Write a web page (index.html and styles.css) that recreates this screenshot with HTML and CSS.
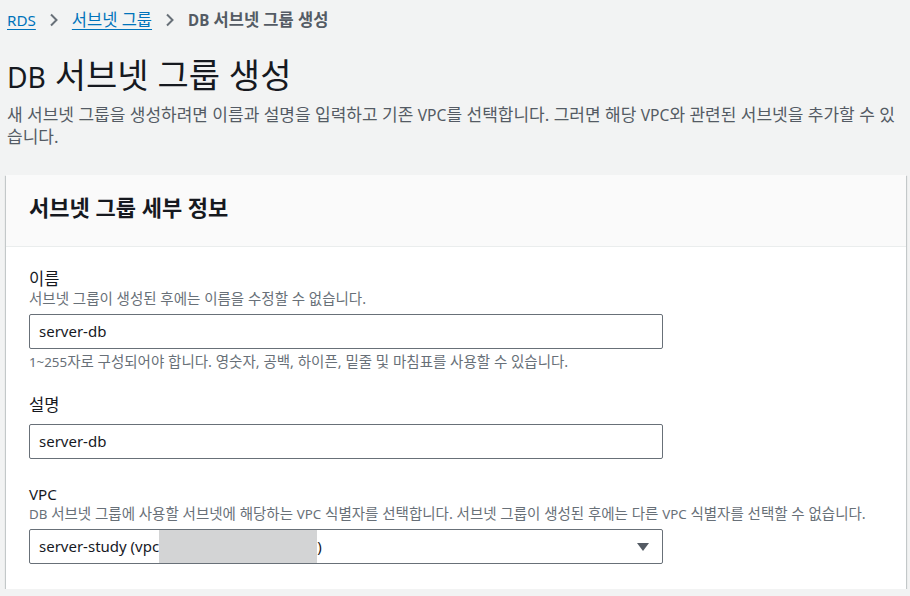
FILE: index.html
```html
<!DOCTYPE html>
<html lang="ko">
<head>
    <meta charset="UTF-8">
    <title>DB 서브넷 그룹 생성</title>
    <link rel="stylesheet" href="styles.css">
</head>
<body>
    <div class="page">
        <nav class="breadcrumbs">
            <a href="#"><span class="en">RDS</span></a>
            <span class="sep">
                <svg width="10" height="14" viewBox="0 0 10 14"><path d="M2 1.5 L7.5 7 L2 12.5" fill="none" stroke="#687078" stroke-width="2"/></svg>
            </span>
            <a href="#">서브넷 그룹</a>
            <span class="sep">
                <svg width="10" height="14" viewBox="0 0 10 14"><path d="M2 1.5 L7.5 7 L2 12.5" fill="none" stroke="#687078" stroke-width="2"/></svg>
            </span>
            <span class="current"><span class="en">DB</span> 서브넷 그룹 생성</span>
        </nav>

        <h1><span class="en">DB</span> 서브넷 그룹 생성</h1>
        <p class="intro">새 서브넷 그룹을 생성하려면 이름과 설명을 입력하고 기존 <span class="en">VPC</span>를 선택합니다. 그러면 해당 <span class="en">VPC</span>와 관련된 서브넷을 추가할 수 있습니다.</p>

        <div class="card">
            <div class="card-header">
                <h2>서브넷 그룹 세부 정보</h2>
            </div>
            <div class="card-body">
                <div class="field">
                    <label>이름</label>
                    <div class="desc">서브넷 그룹이 생성된 후에는 이름을 수정할 수 없습니다.</div>
                    <div class="input">server-db</div>
                    <div class="hint"><span class="en">1~255</span>자로 구성되어야 합니다. 영숫자, 공백, 하이픈, 밑줄 및 마침표를 사용할 수 있습니다.</div>
                </div>
                <div class="field">
                    <label>설명</label>
                    <div class="input">server-db</div>
                </div>
                <div class="field">
                    <label><span class="en">VPC</span></label>
                    <div class="desc"><span class="en">DB</span> 서브넷 그룹에 사용할 서브넷에 해당하는 <span class="en">VPC</span> 식별자를 선택합니다. 서브넷 그룹이 생성된 후에는 다른 <span class="en">VPC</span> 식별자를 선택할 수 없습니다.</div>
                    <div class="input select">
                        <span>server-study (vpc<span class="redacted"></span>)</span>
                        <svg class="caret" width="12" height="8" viewBox="0 0 12 8"><path d="M0 0 H12 L6 8 Z" fill="#545b64"/></svg>
                    </div>
                </div>
            </div>
        </div>
    </div>
</body>
</html>
```

FILE: styles.css
```css
* {
    margin: 0;
    padding: 0;
    box-sizing: border-box;
}

body {
    font-family: "Noto Sans", "Noto Sans CJK KR", sans-serif;
    background: #f2f3f3;
    color: #16191f;
}

.en {
    font-size: 0.92em;
    line-height: 1;
}

.page {
    width: 900px;
    margin-left: 6px;
}

.breadcrumbs {
    display: flex;
    align-items: center;
    height: 20px;
    margin-top: 10px;
    padding-left: 1px;
    font-size: 16.5px;
    line-height: 20px;
}

.breadcrumbs a {
    color: #0073bb;
    text-decoration: underline;
    text-decoration-thickness: 1px;
    text-underline-offset: 3px;
}

.breadcrumbs .sep {
    display: flex;
    margin: 0 13px 0 13px;
}

.breadcrumbs .current {
    color: #545b64;
    font-weight: bold;
}

h1 {
    margin-top: 27px;
    padding-left: 1px;
    font-size: 34px;
    line-height: 36px;
    font-weight: normal;
    color: #16191f;
}

h1 .en {
    font-size: 0.83em;
}

.intro {
    margin-top: 11px;
    padding-left: 1px;
    font-size: 17px;
    line-height: 22px;
    color: #545b64;
    width: 895px;
}

.card {
    margin-top: 27px;
    background: #fff;
    box-shadow: 0 1px 1px 0 rgba(0, 28, 36, 0.3), 1px 1px 1px 0 rgba(0, 28, 36, 0.15), -1px 1px 1px 0 rgba(0, 28, 36, 0.15);
}

.card-header {
    background: #fafafa;
    border-bottom: 1px solid #eaeded;
    padding: 19px 23px 26px;
}

.card-header h2 {
    font-size: 22px;
    line-height: 26px;
    font-weight: bold;
}

.card-body {
    padding: 21px 23px 25px;
}

.field + .field {
    margin-top: 24px;
}

.field label {
    display: block;
    font-size: 16.5px;
    line-height: 21px;
}

.desc, .hint {
    font-size: 14.5px;
    line-height: 18px;
    color: #687078;
}

.hint {
    margin: 3px 0 1px;
}

.input {
    width: 634px;
    height: 35px;
    margin-top: 6px;
    border: 1px solid #687078;
    border-radius: 2px;
    padding: 0 9px;
    font-size: 15px;
    line-height: 33px;
    background: #fff;
}

label + .input {
    margin-top: 9px;
}

.desc + .input {
    margin-top: 7px;
}

.select {
    display: flex;
    justify-content: space-between;
    align-items: center;
}

.redacted {
    display: inline-block;
    width: 158px;
    height: 33px;
    vertical-align: top;
    background: #d3d4d5;
}

.caret {
    margin-right: 4px;
}
```
